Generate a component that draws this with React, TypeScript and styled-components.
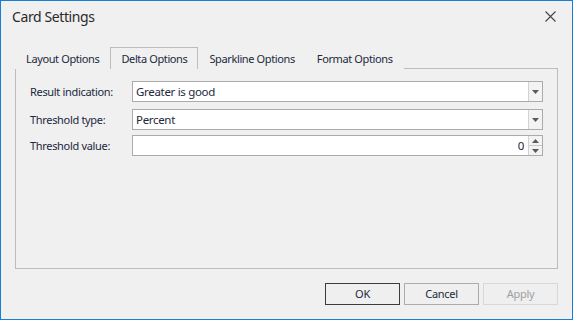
import React from 'react';
import styled, { createGlobalStyle } from 'styled-components';

const GlobalStyle = createGlobalStyle`
  html, body {
    margin: 0;
    padding: 0;
    background: #f0f0f0;
  }
  * {
    box-sizing: border-box;
  }
`;

const TABS = ['Layout Options', 'Delta Options', 'Sparkline Options', 'Format Options'];

const Window = styled.div`
  display: flex;
  flex-direction: column;
  width: 573px;
  height: 320px;
  border: 1px solid #1a7fd4;
  background: #f0f0f0;
  font-family: 'Noto Sans', 'Open Sans', sans-serif;
  font-size: 11px;
  letter-spacing: -0.32px;
  color: #22283c;
`;

const TitleBar = styled.div`
  display: flex;
  align-items: center;
  justify-content: space-between;
  height: 30px;
  padding: 0 14px 0 11px;
  font-size: 14px;
  letter-spacing: -0.4px;
  color: #2a2a2a;
`;

const CloseButton = styled.button`
  display: flex;
  align-items: center;
  justify-content: center;
  width: 16px;
  height: 16px;
  padding: 0;
  border: none;
  background: none;
  color: #444;
`;

const Body = styled.div`
  flex: 1;
  display: flex;
  flex-direction: column;
  padding: 16px 14px 0 14px;
`;

const TabStrip = styled.div`
  display: flex;
  height: 21px;
`;

const Tab = styled.div<{ active?: boolean }>`
  display: flex;
  align-items: center;
  padding: 0 10px 1px 10px;
  margin-bottom: -1px;
  height: 22px;
  white-space: nowrap;
  letter-spacing: -0.38px;
  border: 1px solid ${({ active }) => (active ? '#bcbcbc' : 'transparent')};
  border-bottom: none;
  background: #f0f0f0;
  position: relative;
  z-index: ${({ active }) => (active ? 1 : 0)};
`;

const Panel = styled.div`
  height: 201px;
  width: 543px;
  border: 1px solid #bcbcbc;
  padding: 12px 14px;
  display: flex;
  flex-direction: column;
`;

const Row = styled.div<{ gap: number }>`
  display: flex;
  align-items: center;
  margin-top: ${({ gap }) => gap}px;
`;

const Label = styled.div`
  width: 102px;
  flex-shrink: 0;
  white-space: nowrap;
`;

const Field = styled.div`
  flex: 1;
  display: flex;
  height: 21px;
  border: 1px solid #ababab;
  background: #fff;
`;

const FieldText = styled.div<{ right?: boolean }>`
  flex: 1;
  display: flex;
  align-items: center;
  justify-content: ${({ right }) => (right ? 'flex-end' : 'flex-start')};
  padding: 0 4px 1px 3px;
  font-size: 11.5px;
`;

const DropButton = styled.div`
  width: 14px;
  display: flex;
  align-items: center;
  justify-content: center;
  border-left: 1px solid #d2d2d2;
  background: #f3f3f3;
`;

const SpinButtons = styled.div`
  width: 14px;
  display: flex;
  flex-direction: column;
  border-left: 1px solid #d2d2d2;
  background: #f3f3f3;
`;

const SpinHalf = styled.div<{ top?: boolean }>`
  flex: 1;
  display: flex;
  align-items: center;
  justify-content: center;
  border-bottom: ${({ top }) => (top ? '1px solid #c8c8c8' : 'none')};
`;

const Footer = styled.div`
  display: flex;
  justify-content: flex-end;
  gap: 4px;
  margin-top: 14px;
`;

const Button = styled.button<{ variant?: 'default' | 'disabled' }>`
  width: 75px;
  height: 22px;
  padding: 0 0 1px 0;
  font-family: 'Noto Sans', 'Open Sans', sans-serif;
  font-size: 11px;
  letter-spacing: -0.28px;
  background: #efefef;
  color: ${({ variant }) => (variant === 'disabled' ? '#a0a0a0' : '#22283c')};
  border: 1px solid
    ${({ variant }) =>
      variant === 'default' ? '#3c3c3c' : variant === 'disabled' ? '#d8d8d8' : '#acacac'};
`;

const Arrow = ({ up }: { up?: boolean }) => (
  <svg width="7" height="4" viewBox="0 0 7 4">
    <path d={up ? 'M0 4 L3.5 0 L7 4 Z' : 'M0 0 L7 0 L3.5 4 Z'} fill="#5a5a5a" />
  </svg>
);

const Combo = ({ value }: { value: string }) => (
  <Field>
    <FieldText>{value}</FieldText>
    <DropButton>
      <Arrow />
    </DropButton>
  </Field>
);

export default function App() {
  return (
    <>
      <GlobalStyle />
      <Window>
        <TitleBar>
          <span>Card Settings</span>
          <CloseButton>
            <svg width="11" height="11" viewBox="0 0 11 11">
              <path d="M0.5 0.5 L10.5 10.5 M10.5 0.5 L0.5 10.5" stroke="#444" strokeWidth="1.1" />
            </svg>
          </CloseButton>
        </TitleBar>
        <Body>
          <TabStrip>
            {TABS.map((t) => (
              <Tab key={t} active={t === 'Delta Options'}>
                {t}
              </Tab>
            ))}
          </TabStrip>
          <Panel>
            <Row gap={0}>
              <Label>Result indication:</Label>
              <Combo value="Greater is good" />
            </Row>
            <Row gap={7}>
              <Label>Threshold type:</Label>
              <Combo value="Percent" />
            </Row>
            <Row gap={5}>
              <Label>Threshold value:</Label>
              <Field>
                <FieldText right>0</FieldText>
                <SpinButtons>
                  <SpinHalf top>
                    <Arrow up />
                  </SpinHalf>
                  <SpinHalf>
                    <Arrow />
                  </SpinHalf>
                </SpinButtons>
              </Field>
            </Row>
          </Panel>
          <Footer>
            <Button variant="default">OK</Button>
            <Button>Cancel</Button>
            <Button variant="disabled">Apply</Button>
          </Footer>
        </Body>
      </Window>
    </>
  );
}
